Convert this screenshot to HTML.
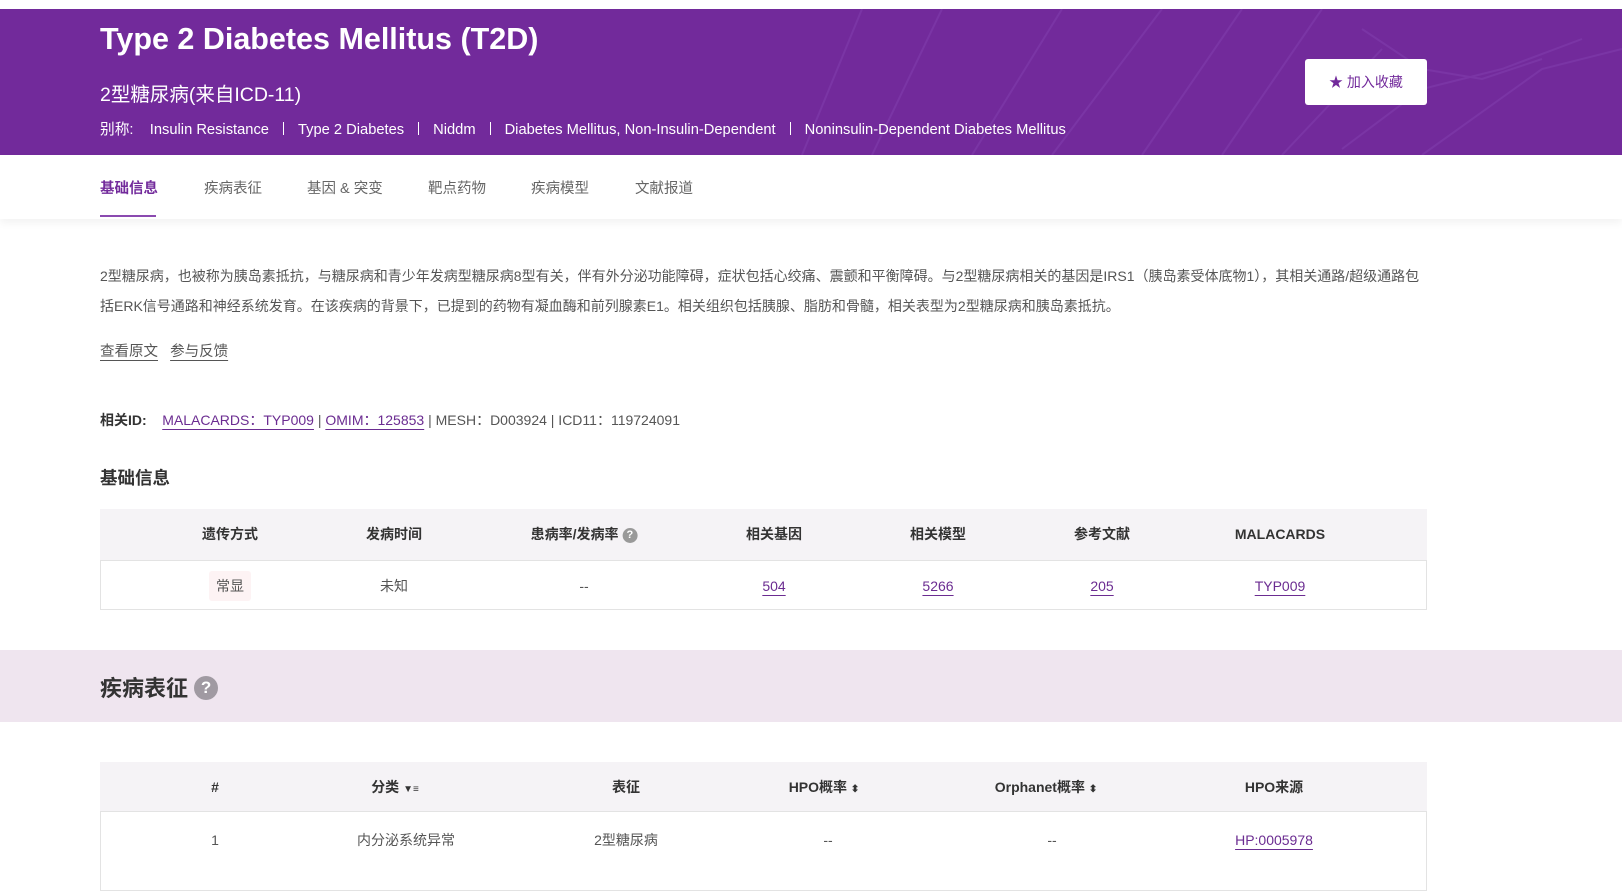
<!DOCTYPE html>
<html><head><meta charset="utf-8"><style>
*{margin:0;padding:0;box-sizing:border-box}
body{width:1622px;height:861px;overflow:hidden;background:#fff;font-family:"Liberation Sans","Noto Sans CJK SC",sans-serif;color:#555;position:relative}
.abs{position:absolute;white-space:nowrap}
.hdr{position:absolute;left:0;top:9px;width:1622px;height:146px;background:#722a9b;overflow:hidden}
.t1{left:100px;top:22px;font-size:30.5px;font-weight:bold;color:#fff}
.t2{left:100px;top:78px;font-size:19.5px;color:#fff}
.al{left:100px;top:118px;font-size:14.7px;color:#fff}
.al span.s{display:inline-block;width:1px;height:13px;background:#fff;margin:0 14px;vertical-align:-1px}
.btn{left:1305px;top:59px;width:122px;height:46px;background:#fff;border-radius:3px;color:#722a9b;font-size:14px;text-align:center;line-height:46px}
.tabs{position:absolute;left:0;top:155px;width:1622px;height:64px;background:#fff;box-shadow:0 4px 8px rgba(0,0,0,.05)}
.tab{top:177px;font-size:14.5px;color:#666}
.para{left:100px;top:262px;width:1330px;font-size:14px;line-height:29.5px;color:#555;white-space:normal}
.u{text-decoration:underline;text-underline-offset:4px}
.lnk{color:#6b2c91;text-decoration:underline;text-underline-offset:4px}
.c{position:absolute;transform:translateX(-50%);white-space:nowrap;font-size:14px;height:22px;line-height:22px}
.h{font-weight:bold;color:#333}
.q{display:inline-block;width:15px;height:15px;border-radius:50%;background:#999;color:#fff;font-size:11px;line-height:15px;text-align:center;vertical-align:1px}
</style></head><body>
<div class="hdr">
<svg width="900" height="146" style="position:absolute;left:722px;top:0" stroke="#8a4ab8" stroke-width="2" fill="none" opacity=".35">
<path d="M80 146 L140 0 M150 146 L220 0 M250 146 L340 0 M330 146 L440 0 M420 146 L520 0 M500 146 L600 0 M560 146 L660 40 M620 140 L700 80 L780 60 L860 30"/>
<path d="M640 20 L700 60 L760 70 L820 50 M700 146 L820 60 L900 40"/>
</svg>
</div>
<div class="abs t1">Type 2 Diabetes Mellitus (T2D)</div>
<div class="abs t2">2型糖尿病(来自ICD-11)</div>
<div class="abs al">别称:&nbsp;&nbsp;&nbsp; Insulin Resistance<span class="s"></span>Type 2 Diabetes<span class="s"></span>Niddm<span class="s"></span>Diabetes Mellitus, Non-Insulin-Dependent<span class="s"></span>Noninsulin-Dependent Diabetes Mellitus</div>
<div class="abs btn">★ 加入收藏</div>
<div class="tabs"></div>
<div class="abs tab" style="left:100px;color:#722a9b;font-weight:bold">基础信息</div>
<div class="abs" style="left:100px;top:215px;width:56px;height:2px;background:#8b4ab0"></div>
<div class="abs tab" style="left:204px">疾病表征</div>
<div class="abs tab" style="left:307px">基因 &amp; 突变</div>
<div class="abs tab" style="left:428px">靶点药物</div>
<div class="abs tab" style="left:531px">疾病模型</div>
<div class="abs tab" style="left:635px">文献报道</div>
<div class="abs para">2型糖尿病，也被称为胰岛素抵抗，与糖尿病和青少年发病型糖尿病8型有关，伴有外分泌功能障碍，症状包括心绞痛、震颤和平衡障碍。与2型糖尿病相关的基因是IRS1（胰岛素受体底物1），其相关通路/超级通路包括ERK信号通路和神经系统发育。在该疾病的背景下，已提到的药物有凝血酶和前列腺素E1。相关组织包括胰腺、脂肪和骨髓，相关表型为2型糖尿病和胰岛素抵抗。</div>
<div class="abs" style="left:100px;top:340px;font-size:14.5px"><span class="u">查看原文</span>&nbsp;&nbsp;&nbsp;<span class="u">参与反馈</span></div>
<div class="abs" style="left:100px;top:410px;font-size:14px"><b style="color:#333">相关ID:</b>&nbsp;&nbsp;&nbsp; <span class="lnk">MALACARDS：TYP009</span> | <span class="lnk">OMIM：125853</span> | MESH：D003924 | ICD11：119724091</div>
<div class="abs" style="left:100px;top:465px;font-size:17.5px;font-weight:bold;color:#333">基础信息</div>

<div class="abs" style="left:100px;top:509px;width:1327px;height:51px;background:#f5f3f6"></div>
<div class="abs" style="left:100px;top:560px;width:1327px;height:50px;border:1px solid #e3e3e3"></div>
<div class="c h" style="left:230px;top:523px">遗传方式</div>
<div class="c h" style="left:394px;top:523px">发病时间</div>
<div class="c h" style="left:584px;top:523px">患病率/发病率 <span class="q">?</span></div>
<div class="c h" style="left:774px;top:523px">相关基因</div>
<div class="c h" style="left:938px;top:523px">相关模型</div>
<div class="c h" style="left:1102px;top:523px">参考文献</div>
<div class="c h" style="left:1280px;top:523px">MALACARDS</div>
<div class="c" style="left:230px;top:575px"><span style="background:#fdf3f4;padding:7px 7px;border-radius:3px">常显</span></div>
<div class="c" style="left:394px;top:575px">未知</div>
<div class="c" style="left:584px;top:575px">--</div>
<div class="c" style="left:774px;top:575px"><span class="lnk">504</span></div>
<div class="c" style="left:938px;top:575px"><span class="lnk">5266</span></div>
<div class="c" style="left:1102px;top:575px"><span class="lnk">205</span></div>
<div class="c" style="left:1280px;top:575px"><span class="lnk">TYP009</span></div>

<div class="abs" style="left:0;top:650px;width:1622px;height:72px;background:#efe5ef"></div>
<div class="abs" style="left:100px;top:671px;font-size:22px;font-weight:bold;color:#333">疾病表征 <span class="q" style="width:24px;height:24px;line-height:24px;font-size:17px;background:#a09aa2;vertical-align:3px">?</span></div>

<div class="abs" style="left:100px;top:762px;width:1327px;height:49px;background:#f5f3f6"></div>
<div class="abs" style="left:100px;top:811px;width:1327px;height:80px;border:1px solid #e3e3e3"></div>
<div class="c h" style="left:215px;top:776px">#</div>
<div class="c h" style="left:395px;top:776px">分类 <span style="font-size:10px">▼≡</span></div>
<div class="c h" style="left:626px;top:776px">表征</div>
<div class="c h" style="left:824px;top:776px">HPO概率 <span style="font-size:10px">⬍</span></div>
<div class="c h" style="left:1046px;top:776px">Orphanet概率 <span style="font-size:10px">⬍</span></div>
<div class="c h" style="left:1274px;top:776px">HPO来源</div>
<div class="c" style="left:215px;top:829px">1</div>
<div class="c" style="left:406px;top:829px">内分泌系统异常</div>
<div class="c" style="left:626px;top:829px">2型糖尿病</div>
<div class="c" style="left:828px;top:829px">--</div>
<div class="c" style="left:1052px;top:829px">--</div>
<div class="c" style="left:1274px;top:829px"><span class="lnk">HP:0005978</span></div>
</body></html>
